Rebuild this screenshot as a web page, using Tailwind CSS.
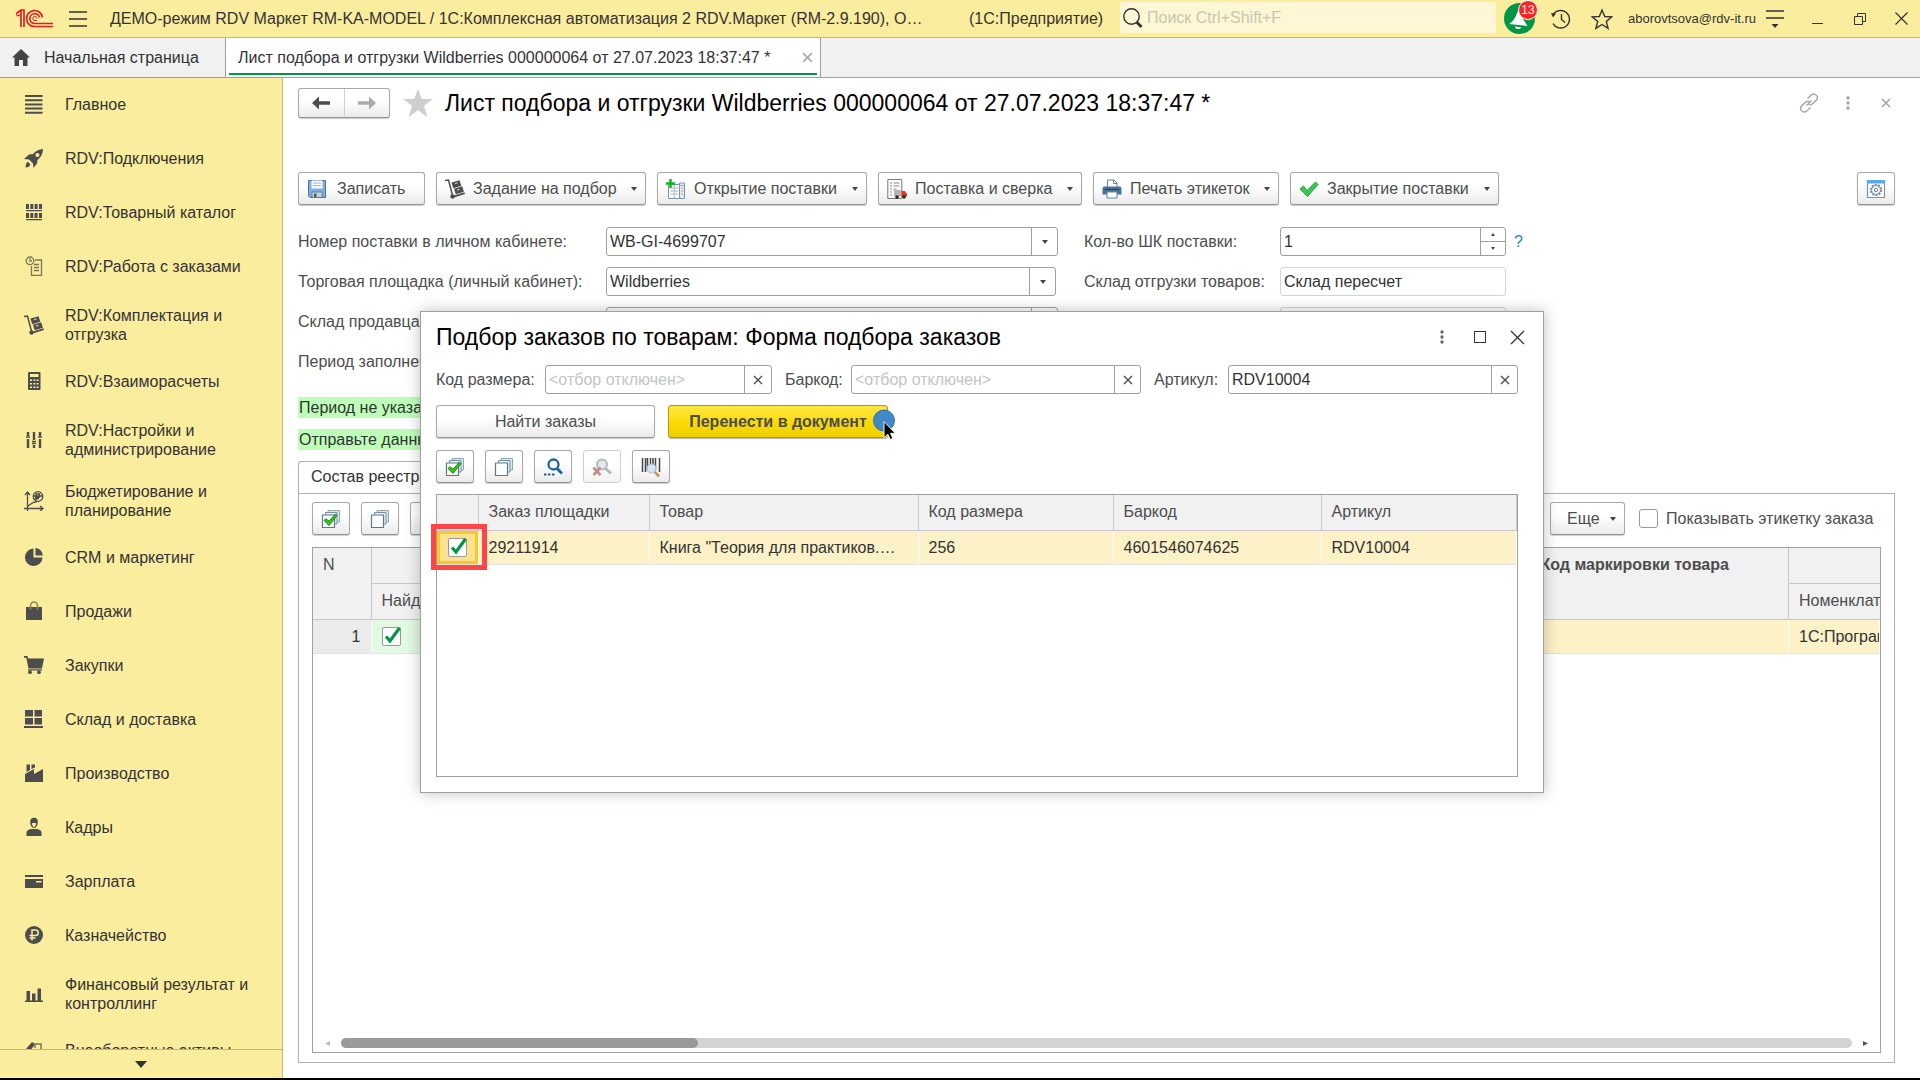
<!DOCTYPE html>
<html lang="ru">
<head>
<meta charset="utf-8">
<title>Лист подбора и отгрузки Wildberries</title>
<script src="https://cdn.jsdelivr.net/npm/@tailwindcss/browser@4"></script>
</head>
<body class="relative flex h-screen flex-col overflow-hidden border-b-2 border-black bg-white font-['Liberation_Sans',Arial,sans-serif] text-base leading-[19px] text-[#4d4d4d]">

<svg class="hidden" aria-hidden="true">
  <symbol id="i-caret" viewBox="0 0 6 4"><path d="M0 0h6L3 4z" fill="#444"/></symbol>
  <symbol id="i-x" viewBox="0 0 10 10"><path d="M1 1l8 8M9 1L1 9" stroke="currentColor" stroke-width="1.4"/></symbol>
  <symbol id="i-dots" viewBox="0 0 4 16"><circle cx="2" cy="2.3" r="1.9" fill="currentColor"/><circle cx="2" cy="8" r="1.9" fill="currentColor"/><circle cx="2" cy="13.7" r="1.9" fill="currentColor"/></symbol>
  <symbol id="i-check" viewBox="0 0 19 19"><path d="M4 9.5l4 4.5L17.5 1" fill="none" stroke="#009646" stroke-width="3.2"/></symbol>
  <symbol id="i-stack" viewBox="0 0 20 20">
    <path d="M7 1.5h11.500v11.500H7z" fill="#dce6ec" stroke="#8fa6b5"/><path d="M4.500 3.500h11.500v11.500H4.500z" fill="#e6eef3" stroke="#7790a1"/><path d="M1.500 6h12v12.500h-12z" fill="#fff" stroke="#5c7a8e" stroke-width="1.200"/>
  </symbol>
  <symbol id="i-stackcheck" viewBox="0 0 20 20">
    <path d="M7 1.500h11.500v11.500H7z" fill="#dce6ec" stroke="#8fa6b5"/><path d="M4.500 3.500h11.500v11.500H4.500z" fill="#e6eef3" stroke="#7790a1"/><path d="M1.500 6h12v12.500h-12z" fill="#fff" stroke="#5c7a8e" stroke-width="1.200"/>
    <path d="M3 11.500l2-1.800 3 2.500L14.500 5l1.500 1.500-8 10z" fill="#35c80c" stroke="#0f7d0a" stroke-width=".9"/>
  </symbol>
  <symbol id="i-truck" viewBox="0 0 20 20">
    <path d="M0 1.500l3.500-.5L8 18" fill="none" stroke="#4d4d4d" stroke-width="1.500"/>
    <circle cx="7.500" cy="17.500" r="2.200" fill="#4d4d4d"/><path d="M9 16.500l10.500-3.300.5 1.800-11 3.500z" fill="#4d4d4d"/>
    <path d="M6.500 3.500l8-2.300 1.800 5.500-8 2.500z" fill="#4d4d4d"/><path d="M9 9.700l8.200-2.500 1.700 5.500-8.200 2.600z" fill="#4d4d4d"/>
    <path d="M10 4.500l2.500-.7M12 11l2.500-.7" stroke="#d8d0a0" stroke-width="1.200"/>
  </symbol>
</svg>

<!-- Title bar -->
<header class="flex h-[38px] shrink-0 items-center border-b border-[#c6ba6c] bg-[#fbed9e] text-[#333]">
  <svg class="ml-4 h-[19px] w-[37px] shrink-0" viewBox="0 0 37 19" fill="none" stroke="#dd1f26" stroke-width="1.700"><path d="M0 5l4-3.500h1V18M8 18V1H4.500M.5 6.500H4"/><path d="M26.500 8.500a8 8 0 1 0-7.500 9h18M23.500 8.500a4.900 4.900 0 1 0-4.500 6h18"/><path d="M20.800 9.500a2 2 0 1 0-1.800 2h2" stroke-width="1"/></svg>
  <button class="ml-4 shrink-0" aria-label="Меню"><svg class="h-[18px] w-[18px]" viewBox="0 0 18 18" stroke="#333" stroke-width="1.500"><path d="M0 2h18M0 9h18M0 16h18"/></svg></button>
  <div class="ml-[23px] w-[836px] shrink whitespace-nowrap">ДЕМО-режим RDV Маркет RM-KA-MODEL / 1С:Комплексная автоматизация 2 RDV.Маркет (RM-2.9.190), О…</div>
  <div class="ml-[23px] w-[138px] shrink-0">(1С:Предприятие)</div>
  <label class="mt-[2px] ml-[13px] flex h-[31px] min-w-0 flex-1 items-center gap-1 self-start rounded-[3px] bg-[#fef7d5] pl-[3px]">
    <svg class="h-5 w-5 shrink-0" viewBox="0 0 20 20" fill="none" stroke="#333"><circle cx="8.500" cy="8.500" r="7.700" stroke-width="1.400"/><path d="M13.500 14l5 5" stroke-width="2.800"/></svg>
    <input type="search" placeholder="Поиск Ctrl+Shift+F" aria-label="Поиск" class="min-w-0 flex-1 bg-transparent leading-[19px] placeholder-[#c9c5b0] outline-none">
  </label>
  <button class="relative ml-2 h-[31px] w-[31px] shrink-0 rounded-full bg-[#009646]" aria-label="Уведомления">
    <svg class="h-[31px] w-[31px]" viewBox="0 0 31 31"><path d="M14 8L23.500 23 5 21c4-2 6-6 9-13z" fill="#fff"/><path d="M10.500 23.500c1 3 5.500 3.500 7 .8z" fill="#fff"/></svg>
    <span class="absolute -top-[3px] -right-[3px] flex h-5 w-5 items-center justify-center rounded-full border border-white bg-[#fb2323] text-[12px] text-white">13</span>
  </button>
  <button class="ml-4 shrink-0" aria-label="История"><svg class="h-5 w-5" viewBox="0 0 20 20" fill="none" stroke="#333" stroke-width="1.400"><path d="M2 6a8.800 8.800 0 1 1 0 8.500"/><path d="M10.500 5v5.500l3.500 3"/><path d="M0 4l5 .500-3 4z" fill="#333" stroke="none"/></svg></button>
  <button class="ml-5 shrink-0" aria-label="Избранное"><svg class="h-[22px] w-[22px]" viewBox="0 0 22 22" fill="none" stroke="#333" stroke-width="1.400"><path d="M11 2l2.700 6.500 7 .4-5.400 4.500 1.800 7L11 16.500 4.900 20.400l1.800-7L1.300 8.900l7-.4z"/></svg></button>
  <div class="ml-[15px] w-[122px] shrink-0 text-[13px] whitespace-nowrap">aborovtsova@rdv-it.ru</div>
  <button class="ml-4 shrink-0" aria-label="Сервис"><svg class="h-5 w-[18px]" viewBox="0 0 18 20" stroke="#333" stroke-width="1.500"><path d="M0 2h18M0 9h18"/><path d="M5.500 15h7L9 19z" fill="#333" stroke="none"/></svg></button>
  <button class="ml-7 shrink-0" aria-label="Свернуть"><svg class="h-3 w-3" viewBox="0 0 12 12" stroke="#333"><path d="M0 10.500h11"/></svg></button>
  <button class="ml-[30px] shrink-0" aria-label="Восстановить"><svg class="h-3 w-3" viewBox="0 0 12 12" fill="none" stroke="#333"><path d="M.5 3.500h8v8h-8zM3.500 3.500v-3h8v8h-3"/></svg></button>
  <button class="mr-3 ml-[29px] shrink-0" aria-label="Закрыть"><svg class="h-[13px] w-[13px]" viewBox="0 0 13 13" stroke="#333" stroke-width="1.200"><path d="M.5.5l12 12M12.500.5l-12 12"/></svg></button>
</header>

<!-- Open pages -->
<nav class="flex h-10 shrink-0 border-b border-[#a0a0a0] bg-[#f1f1f1] text-[#333]">
  <a href="#" class="flex w-[226px] items-center gap-3.5 border-r border-[#a0a0a0] pl-3">
    <svg class="h-[17px] w-[18px]" viewBox="0 0 18 17"><path d="M9 0l9 8.500h-2.500V17H11v-6H7v6H2.500V8.500H0z" fill="#444"/></svg>Начальная страница</a>
  <div class="flex w-[595px] flex-col border-r border-[#a0a0a0] bg-white px-[3px] pb-[2px]">
    <div class="flex flex-1 items-center justify-between border-b-2 border-[#009646] pt-[3px] pr-1 pl-[9px]">
      <a href="#" class="whitespace-nowrap">Лист подбора и отгрузки Wildberries 000000064 от 27.07.2023 18:37:47 *</a>
      <button class="text-[#a8a8a8]" aria-label="Закрыть вкладку"><svg class="h-[11px] w-[11px]"><use href="#i-x"/></svg></button>
    </div>
  </div>
</nav>

<div class="flex min-h-0 flex-1">
  <!-- Sections -->
  <aside class="flex w-[283px] shrink-0 flex-col border-r border-[#c6ba6c] bg-[#fbed9e] text-[#333]">
    <ul class="min-h-0 flex-1 overflow-hidden">
      <li><a href="#" class="flex h-[54px] items-center gap-[21px] pb-0.5 pl-6"><svg class="h-5 w-5 shrink-0" viewBox="0 0 20 20" stroke="#4d4d4d" stroke-width="2"><path d="M1 2h17.500M1 6.200h17.500M1 10.400h17.500M1 14.600h17.500M1 18.800h17.500"/></svg>Главное</a></li>
      <li><a href="#" class="flex h-[54px] items-center gap-[21px] pb-0.5 pl-6"><svg class="h-5 w-5 shrink-0" viewBox="0 0 20 20" fill="#4d4d4d"><path fill-rule="evenodd" d="M19 1c-4 .3-7.500 2-10 5L5 6.500 0 11l5 .5 4 4 .5 4.500 3.500-4.500.5-3.500c4-3 5.300-7 5.500-11zM13.500 5a2 2 0 1 1-.1 4.100A2 2 0 0 1 13.500 5z"/><path d="M3.500 13.500l3 3-2 2.500-3 .5L2 16z"/></svg>RDV:Подключения</a></li>
      <li><a href="#" class="flex h-[54px] items-center gap-[21px] pb-0.5 pl-6"><svg class="h-5 w-5 shrink-0" viewBox="0 0 20 20" fill="#4d4d4d"><path d="M2 2h3v5H2zM6.300 2h3v5h-3zM10.600 2h3v5h-3zM15 2h3v5h-3zM2 11h3v5H2zM6.300 11h3v5h-3zM10.600 11h3v5h-3zM15 11h3v5h-3zM2 8h16v1.200H2zM2 17h16v1.300H2z"/></svg>RDV:Товарный каталог</a></li>
      <li><a href="#" class="flex h-[54px] items-center gap-[21px] pb-0.5 pl-6"><svg class="h-5 w-5 shrink-0" viewBox="0 0 20 20" fill="none" stroke="#7c7656" stroke-width="1.300"><circle cx="6" cy="4.800" r="3.800"/><path d="M6 2.500v2.500h2M11 4h6.500v15.300h-10V10M10 8.500h5M10 11.500h5M10 14.500h5"/></svg>RDV:Работа с заказами</a></li>
      <li><a href="#" class="flex h-[61px] items-center gap-[21px] pl-6"><svg class="h-5 w-5 shrink-0"><use href="#i-truck"/></svg><span>RDV:Комплектация и<br>отгрузка</span></a></li>
      <li><a href="#" class="flex h-[54px] items-center gap-[21px] pb-0.5 pl-6"><svg class="h-5 w-5 shrink-0" viewBox="0 0 20 20"><rect x="4" y="1" width="12.500" height="18" rx="1" fill="#4d4d4d"/><path d="M6 3h8.500v3H6zM6 8.500h2v1.500H6zM9.300 8.500h2v1.500h-2zM12.500 8.500h2v1.500h-2zM6 12h2v1.500H6zM9.300 12h2v1.500h-2zM12.500 12h2v1.500h-2zM6 15.500h2V17H6zM9.300 15.500h2V17h-2zM12.500 15.500h2V17h-2z" fill="#fbed9e"/></svg>RDV:Взаиморасчеты</a></li>
      <li><a href="#" class="flex h-[61px] items-center gap-[21px] pl-6"><svg class="h-5 w-5 shrink-0" viewBox="0 0 20 20" stroke="#4d4d4d"><path d="M4 2v4M4 9v9M10 2v8M10 15v3M16 2v4M16 9v9" stroke-width="2.400"/><path d="M2 7h4M8 11.500h4M8 13.500h4M14 7h4" stroke-width="1.300"/></svg><span>RDV:Настройки и<br>администрирование</span></a></li>
      <li><a href="#" class="flex h-[61px] items-center gap-[21px] pl-6"><svg class="h-5 w-5 shrink-0" viewBox="0 0 20 20" fill="none" stroke="#4d4d4d" stroke-width="1.300"><path d="M3.500 20V1M1 4l2.500-3L6 4M0 17.500h19M16 15l3 2.500-3 2.500M4 15l5-3.500 4-1"/><circle cx="14" cy="5.500" r="4.800"/><path d="M12 9V3h3.500v3H11M11 7.500h4M10 5h9"/></svg><span>Бюджетирование и<br>планирование</span></a></li>
      <li><a href="#" class="flex h-[54px] items-center gap-[21px] pb-0.5 pl-6"><svg class="h-5 w-5 shrink-0" viewBox="0 0 20 20" fill="#4d4d4d"><path d="M9.500 1.500v9h9a8.800 8.800 0 1 1-9-9z"/><path d="M11.500 1c4 .3 7 3.500 7.300 7.500h-7.300z"/></svg>CRM и маркетинг</a></li>
      <li><a href="#" class="flex h-[54px] items-center gap-[21px] pb-0.5 pl-6"><svg class="h-5 w-5 shrink-0" viewBox="0 0 20 20"><path d="M2 6h16v13H2z" fill="#4d4d4d"/><path d="M6.500 9V4.500a3.500 3.500 0 0 1 7 0V9" fill="none" stroke="#8c845c" stroke-width="1.600"/></svg>Продажи</a></li>
      <li><a href="#" class="flex h-[54px] items-center gap-[21px] pb-0.5 pl-6"><svg class="h-5 w-5 shrink-0" viewBox="0 0 20 20" fill="#4d4d4d"><path d="M0 1h3.500l.8 2.500H20l-2 10H4.500L2.300 2.800H0zM4 14.300h14v1.200H4z"/><circle cx="6" cy="17.200" r="1.900"/><circle cx="15" cy="17.200" r="1.900"/></svg>Закупки</a></li>
      <li><a href="#" class="flex h-[54px] items-center gap-[21px] pb-0.5 pl-6"><svg class="h-5 w-5 shrink-0" viewBox="0 0 20 20" fill="#4d4d4d"><path d="M1 1h8v6.500H1zM10.500 1h7.500v6.500h-7.500zM1 9h8v6.500H1zM10.500 9h7.500v6.500h-7.500zM0 17h19v2H0z"/></svg>Склад и доставка</a></li>
      <li><a href="#" class="flex h-[54px] items-center gap-[21px] pb-0.5 pl-6"><svg class="h-5 w-5 shrink-0" viewBox="0 0 20 20" fill="#4d4d4d"><path d="M1 19V11l9-5v5l9-5v13zM2.500 1.500h3.500v5.500l-3.500 2zM7.500 1.500H11v3L7.500 6z"/></svg>Производство</a></li>
      <li><a href="#" class="flex h-[54px] items-center gap-[21px] pb-0.5 pl-6"><svg class="h-5 w-5 shrink-0" viewBox="0 0 20 20"><path d="M2.500 19v-3.500c0-2 2-3 4.500-3.500h6c2.500.5 4.500 1.500 4.500 3.500V19z" fill="#4d4d4d"/><path d="M6.200 5a3.800 4.200 0 0 1 7.600 0c0 3-1.700 6-3.800 6s-3.800-3-3.800-6z" fill="#4d4d4d"/><path d="M8 6h4c0 2-.8 4-2 4s-2-2-2-4z" fill="#fbed9e"/></svg>Кадры</a></li>
      <li><a href="#" class="flex h-[54px] items-center gap-[21px] pb-0.5 pl-6"><svg class="h-5 w-5 shrink-0" viewBox="0 0 20 20"><path d="M1 4h18v2H1z" fill="#4d4d4d"/><path d="M1 8h18v9H1z" fill="#4d4d4d"/><path d="M12 10h5.500v1.500H12z" fill="#fbed9e"/></svg>Зарплата</a></li>
      <li><a href="#" class="flex h-[54px] items-center gap-[21px] pb-0.5 pl-6"><svg class="h-5 w-5 shrink-0" viewBox="0 0 20 20"><circle cx="10" cy="10" r="9" fill="#4d4d4d"/><path d="M8 15.500V5h3.500a2.800 2.800 0 0 1 0 5.600H5.500M5.500 13h6" fill="none" stroke="#fbed9e" stroke-width="1.500"/></svg>Казначейство</a></li>
      <li><a href="#" class="flex h-[61px] items-center gap-[21px] pl-6"><svg class="h-5 w-5 shrink-0" viewBox="0 0 20 20" fill="#4d4d4d"><path d="M1 16.500h18V18H1zM2.500 7H6v9.500H2.500zM8 9.500h3.500v7H8zM13.500 4.500H17v12h-3.500z"/></svg><span>Финансовый результат и<br>контроллинг</span></a></li>
      <li><a href="#" class="flex h-[54px] items-center gap-[21px] pb-0.5 pl-6"><svg class="h-5 w-5 shrink-0" viewBox="0 0 20 20"><path d="M2 9l6-7 3 2-4 6z" fill="#4d4d4d"/><path d="M11 8V4h6v6h-6" fill="none" stroke="#7c7656" stroke-width="1.500"/></svg>Внеоборотные активы</a></li>
    </ul>
    <button class="flex h-[29px] shrink-0 items-center justify-center border-t border-[#c6ba6c]" aria-label="Ещё разделы"><svg class="h-[7px] w-3" viewBox="0 0 12 7"><path d="M0 0h12L6 7z" fill="#333"/></svg></button>
  </aside>

  <!-- Document form -->
  <main class="flex min-w-0 flex-1 flex-col pt-[10px] pr-[25px] pb-[15px] pl-[15px]">
    <div class="flex items-center">
      <div class="flex h-[30px] w-[92px] rounded-[3px] border border-[#a8a8a8] border-b-[#949494] bg-linear-to-b from-white from-40% to-[#ebebeb] shadow-[0_1px_1px_rgba(0,0,0,0.2)]">
        <button class="flex flex-1 items-center justify-center border-r border-[#d0d0d0]" aria-label="Назад"><svg class="h-3.5 w-[18px]" viewBox="0 0 18 14" fill="#4d4d4d"><path d="M0 7l7-6.500v4.800h11v3.400H7v4.800z"/></svg></button>
        <button class="flex flex-1 items-center justify-center" aria-label="Вперёд"><svg class="h-3.5 w-[18px]" viewBox="0 0 18 14" fill="#aaa"><path d="M18 7l-7-6.500v4.800H0v3.400h11v4.800z"/></svg></button>
      </div>
      <button class="ml-[13px]" aria-label="В избранное"><svg class="h-[30px] w-[30px]" viewBox="0 0 30 30"><path d="M15 1l3.800 10H30l-9 6.800L24.300 29 15 22.200 5.700 29 9 17.800 0 11h11.200z" fill="#cfcfcf"/></svg></button>
      <h1 class="ml-3 flex-1 text-[23px] leading-[28px] whitespace-nowrap text-black">Лист подбора и отгрузки Wildberries 000000064 от 27.07.2023 18:37:47 *</h1>
      <div class="flex items-center gap-[27px] pr-1 text-[#a0a0a0]">
        <button aria-label="Ссылка"><svg class="h-5 w-5" viewBox="0 0 20 20" fill="none" stroke="#a8a8a8" stroke-width="1.500"><path d="M8.500 5.500l4-3.700c2-1.500 4.200-.5 5.200.8 1 1.500.8 3.300-.4 4.500l-3.800 3.700c-1 1-2.800 1-4 .2M11.500 14.500l-4 3.700c-2 1.500-4.200.5-5.200-.8-1-1.500-.8-3.300.4-4.500l3.800-3.700c1-1 2.800-1 4-.2M7.500 12.500l5-5"/></svg></button>
        <button aria-label="Ещё"><svg class="h-[14px] w-1"><use href="#i-dots"/></svg></button>
        <button class="pl-1" aria-label="Закрыть"><svg class="h-[10px] w-[10px]"><use href="#i-x"/></svg></button>
      </div>
    </div>

    <!-- Commands -->
    <div class="mt-[54px] flex gap-[11px] whitespace-nowrap">
      <button class="flex h-[33px] w-[127px] items-center gap-2.5 rounded-[3px] border border-[#a8a8a8] border-b-[#949494] bg-linear-to-b from-white from-40% to-[#ebebeb] pl-2 shadow-[0_1px_1px_rgba(0,0,0,0.2)]">
        <svg class="h-5 w-5" viewBox="0 0 20 20"><path d="M1.500 1.500h17v17H3l-1.500-1.500z" fill="#7db0e0" stroke="#4c7196"/><path d="M4.500 1.500h11v8h-11z" fill="#fff"/><path d="M6 4h8M6 6.500h8" stroke="#9db4c6"/><path d="M5 13h10v5.500H5z" fill="#c9d2d8" stroke="#4c7196" stroke-width=".8"/><path d="M7 14.500h2.500V18H7z" fill="#4d5a66"/></svg>Записать</button>
      <button class="flex h-[33px] w-[210px] items-center gap-2 rounded-[3px] border border-[#a8a8a8] border-b-[#949494] bg-linear-to-b from-white from-40% to-[#ebebeb] pr-2 pl-2 shadow-[0_1px_1px_rgba(0,0,0,0.2)]">
        <svg class="h-5 w-5"><use href="#i-truck"/></svg><span class="flex-1 text-left">Задание на подбор</span><svg class="h-1 w-1.5"><use href="#i-caret"/></svg></button>
      <button class="flex h-[33px] w-[210px] items-center gap-2 rounded-[3px] border border-[#a8a8a8] border-b-[#949494] bg-linear-to-b from-white from-40% to-[#ebebeb] pr-2 pl-2 shadow-[0_1px_1px_rgba(0,0,0,0.2)]">
        <svg class="h-5 w-5" viewBox="0 0 20 20"><path d="M2.500 5.500h11v14h-11z" fill="#fff" stroke="#7a94a6"/><path d="M13.500 4h5v15.500h-5z" fill="#e4ecf1" stroke="#7a94a6"/><path d="M4.500 9h3M4.500 12h3M4.500 15h3M9 9h3M9 12h3M9 15h3M15 9h2.500M15 12h2.500M15 15h2.500M13.500 6.500h5M8.200 6v13" stroke="#9aafbd"/><path d="M4.500 0v9M0 4.500h9" stroke="#0fb51c" stroke-width="2.400"/></svg><span class="flex-1 text-left">Открытие поставки</span><svg class="h-1 w-1.5"><use href="#i-caret"/></svg></button>
      <button class="flex h-[33px] w-[204px] items-center gap-2 rounded-[3px] border border-[#a8a8a8] border-b-[#949494] bg-linear-to-b from-white from-40% to-[#ebebeb] pr-2 pl-2 shadow-[0_1px_1px_rgba(0,0,0,0.2)]">
        <svg class="h-5 w-5" viewBox="0 0 20 20"><path d="M.8.500h14v19H.8z" fill="#fff" stroke="#777"/><path d="M3 4h2M6.500 4h6M3 7h2M6.500 7h6M3 10h2M6.500 10h3M3 13h2M3 16h2" stroke="#888" stroke-width="1.200"/><path d="M7 11h7.500v6.500H7z" fill="#b5b5b5"/><path d="M14.500 12h3.300l2.200 3v2.500h-5.500z" fill="#e2341d"/><circle cx="10" cy="18" r="1.800" fill="#222"/><circle cx="17" cy="18" r="1.800" fill="#222"/></svg><span class="flex-1 text-left">Поставка и сверка</span><svg class="h-1 w-1.5"><use href="#i-caret"/></svg></button>
      <button class="flex h-[33px] w-[186px] items-center gap-2 rounded-[3px] border border-[#a8a8a8] border-b-[#949494] bg-linear-to-b from-white from-40% to-[#ebebeb] pr-2 pl-2 shadow-[0_1px_1px_rgba(0,0,0,0.2)]">
        <svg class="h-5 w-5" viewBox="0 0 20 20"><path d="M5.500 8V1h6.500l3 3v4" fill="#fff" stroke="#6a8299"/><path d="M11.500 1v3.500H15" fill="none" stroke="#6a8299"/><path d="M1.500 7.500h17l1 2v6h-19v-6z" fill="#4a7199"/><path d="M3 10.500h14" stroke="#27415c"/><path d="M5 13h10v6H5z" fill="#fff" stroke="#6a8299"/></svg><span class="flex-1 text-left">Печать этикеток</span><svg class="h-1 w-1.5"><use href="#i-caret"/></svg></button>
      <button class="flex h-[33px] w-[209px] items-center gap-2 rounded-[3px] border border-[#a8a8a8] border-b-[#949494] bg-linear-to-b from-white from-40% to-[#ebebeb] pr-2 pl-2 shadow-[0_1px_1px_rgba(0,0,0,0.2)]">
        <svg class="h-5 w-5" viewBox="0 0 20 20"><path d="M1 10l3.500-3 3.500 4.500L16.500 3 19 5.500 8.500 17.500z" fill="#3cc552" stroke="#2aa83f"/></svg><span class="flex-1 text-left">Закрытие поставки</span><svg class="h-1 w-1.5"><use href="#i-caret"/></svg></button>
      <button class="ml-auto flex h-[33px] w-[38px] items-center justify-center rounded-[3px] border border-[#a8a8a8] border-b-[#949494] bg-linear-to-b from-white from-40% to-[#ebebeb] shadow-[0_1px_1px_rgba(0,0,0,0.2)]" aria-label="Настройка">
        <svg class="h-5 w-5" viewBox="0 0 20 20"><path d="M1.500 1.500h17v17h-17z" fill="#fff" stroke="#7f93a3" stroke-width="1.200"/><path d="M1 1h18v3.500H1z" fill="#58a7e6"/><circle cx="10" cy="11" r="5.300" fill="#eef3f6" stroke="#6c8190" stroke-width="1.600" stroke-dasharray="2 1.300"/><circle cx="10" cy="11" r="4.300" fill="#fff" stroke="#6c8190" stroke-width=".8"/><circle cx="10" cy="11" r="1.700" fill="none" stroke="#6c8190"/></svg></button>
    </div>

    <!-- Fields -->
    <div class="mt-[22px] grid w-full grid-cols-[308px_452px_26px_196px_226px_1fr] gap-y-[11px] *:h-[29px]">
      <label for="f1" class="flex items-center">Номер поставки в личном кабинете:</label>
      <div class="flex rounded-[3px] border border-[#a0a0a0]"><input id="f1" value="WB-GI-4699707" class="min-w-0 flex-1 pl-[3px] text-[#333] outline-none"><button class="flex w-[26px] items-center justify-center border-l border-[#a0a0a0]" aria-label="Выбрать"><svg class="h-1 w-1.5"><use href="#i-caret"/></svg></button></div>
      <i></i>
      <label for="f2" class="flex items-center">Кол-во ШК поставки:</label>
      <div class="flex rounded-[3px] border border-[#a0a0a0]"><input id="f2" value="1" class="min-w-0 flex-1 pl-[3px] text-[#333] outline-none">
        <div class="flex w-[25px] flex-col border-l border-[#a0a0a0]"><button class="flex flex-1 items-center justify-center border-b border-[#a0a0a0]" aria-label="Больше"><svg class="h-[3px] w-1" viewBox="0 0 4 3"><path d="M0 3h4L2 0z" fill="#444"/></svg></button><button class="flex flex-1 items-center justify-center" aria-label="Меньше"><svg class="h-[3px] w-1" viewBox="0 0 4 3"><path d="M0 0h4L2 3z" fill="#444"/></svg></button></div></div>
      <div class="flex items-center pl-2"><a href="#" class="text-[#1e7fc8]">?</a></div>

      <label for="f3" class="flex items-center">Торговая площадка (личный кабинет):</label>
      <div class="mr-[2px] flex rounded-[3px] border border-[#a0a0a0]"><select id="f3" class="min-w-0 flex-1 appearance-none pl-[3px] text-[#333] outline-none"><option>Wildberries</option></select><span class="flex w-[26px] items-center justify-center border-l border-[#a0a0a0]"><svg class="h-1 w-1.5"><use href="#i-caret"/></svg></span></div>
      <i></i>
      <label for="f4" class="flex items-center whitespace-nowrap">Склад отгрузки товаров:</label>
      <input id="f4" readonly value="Склад пересчет" class="min-w-0 rounded-[3px] border border-[#d4d4d4] pl-[3px] text-[#333] outline-none">
      <i></i>

      <label for="f5" class="flex items-center">Склад продавца:</label>
      <div class="flex rounded-[3px] border border-[#a0a0a0]"><select id="f5" class="min-w-0 flex-1 appearance-none pl-[3px] outline-none"></select><span class="w-[26px] border-l border-[#a0a0a0]"></span></div>
      <i></i><i></i>
      <input readonly aria-label="Дополнительно" class="min-w-0 rounded-[3px] border border-[#d4d4d4]">
      <i></i>
      <div class="flex items-center">Период заполнения:</div>
    </div>
    <div class="mt-[21px] flex w-[400px] flex-col gap-[11px] text-[#333] *:h-[21px] *:bg-[#bdffb9] *:pt-px *:pl-px">
      <p>Период не указан</p>
      <p>Отправьте данные</p>
    </div>

    <!-- Register tab -->
    <div class="mt-[11px] h-8 w-[140px] rounded-tl-[3px] border-t border-l border-[#b0b0b0] pt-[5px] pl-3 text-[#333]">Состав реестра</div>
    <section class="flex min-h-0 flex-1 flex-col border border-[#b0b0b0] px-[13px] pt-2 pb-[9px]">
      <div class="flex shrink-0 items-center gap-[11px]">
        <button class="flex h-[33px] w-[38px] items-center justify-center rounded-[3px] border border-[#a8a8a8] border-b-[#949494] bg-linear-to-b from-white from-40% to-[#ebebeb] shadow-[0_1px_1px_rgba(0,0,0,0.2)]" aria-label="Отметить все"><svg class="h-5 w-5"><use href="#i-stackcheck"/></svg></button>
        <button class="flex h-[33px] w-[38px] items-center justify-center rounded-[3px] border border-[#a8a8a8] border-b-[#949494] bg-linear-to-b from-white from-40% to-[#ebebeb] shadow-[0_1px_1px_rgba(0,0,0,0.2)]" aria-label="Снять отметки"><svg class="h-5 w-5"><use href="#i-stack"/></svg></button>
        <button class="h-[33px] w-[38px] rounded-[3px] border border-[#a8a8a8] border-b-[#949494] bg-linear-to-b from-white from-40% to-[#ebebeb] shadow-[0_1px_1px_rgba(0,0,0,0.2)]" aria-label="Заполнить"></button>
        <button class="ml-auto flex h-[33px] w-[75px] items-center gap-2.5 rounded-[3px] border border-[#a8a8a8] border-b-[#949494] bg-linear-to-b from-white from-40% to-[#ebebeb] pl-4 shadow-[0_1px_1px_rgba(0,0,0,0.2)]">Еще<svg class="h-1 w-1.5"><use href="#i-caret"/></svg></button>
        <label class="ml-[3px] flex w-[242px] items-center gap-2 whitespace-nowrap"><input type="checkbox" class="h-[19px] w-[19px] appearance-none rounded-[3px] border border-[#999] bg-white">Показывать этикетку заказа</label>
      </div>

      <div class="mt-3 flex min-h-0 flex-1 flex-col border border-[#a0a0a0]">
        <table class="w-full table-fixed border-collapse text-left whitespace-nowrap">
          <colgroup><col class="w-[58px]"><col><col class="w-[258px]"><col class="w-[91px]"></colgroup>
          <thead class="bg-[#f1f1f1] *:*:overflow-hidden">
            <tr class="h-[35px] *:border-b *:border-[#c8c8c8]"><th rowspan="2" class="border-r pt-[7px] pl-2.5 align-top font-normal">N</th><th></th><th rowspan="2" class="border-r pt-[7px] pl-2.5 align-top">Код маркировки товара</th><th></th></tr>
            <tr class="h-9 *:border-b *:border-[#c8c8c8]"><th class="pb-0.5 pl-2.5 font-normal">Найден</th><th class="pb-0.5 pl-2.5 font-normal">Номенклатура</th></tr>
          </thead>
          <tbody>
            <tr class="h-[34px] border-b border-[#e2e2e2] bg-[#fdf1c7] text-[#333] *:overflow-hidden *:border-r *:border-white"><td class="bg-[#ebebeb] pr-2.5 text-right">1</td><td class="bg-linear-to-r from-[#e2f9e2] from-50% to-[#fdf1c7] to-50% pl-2.5"><label class="grid w-[19px]"><input type="checkbox" checked aria-label="Найден" class="col-start-1 row-start-1 h-[19px] w-[19px] appearance-none rounded-[2px] border border-[#999] bg-white"><svg class="col-start-1 row-start-1 h-[19px] w-[19px]"><use href="#i-check"/></svg></label></td><td></td><td class="pl-2.5">1С:Программа</td></tr>
          </tbody>
        </table>
        <div class="mt-auto mb-1 flex h-[10px] items-center gap-[11px] px-3">
          <svg class="h-[5px] w-[5px] shrink-0" viewBox="0 0 5 5"><path d="M5 0v5L0 2.500z" fill="#bbb"/></svg>
          <div class="h-[10px] flex-1 rounded-full bg-[#d3d3d3]"><div class="h-[10px] w-[357px] rounded-full bg-[#999]"></div></div>
          <svg class="h-[5px] w-[5px] shrink-0" viewBox="0 0 5 5"><path d="M0 0v5l5-2.500z" fill="#555"/></svg>
        </div>
      </div>
    </section>
  </main>
</div>

<!-- Order picking window -->
<div role="dialog" aria-labelledby="dlg" class="absolute top-[311px] left-[420px] flex h-[482px] w-[1124px] flex-col border border-[#a0a0a0] bg-white pt-[11px] pr-[25px] pb-[15px] pl-[15px] shadow-[0_0_14px_rgba(0,0,0,0.25)]">
  <div class="flex h-7 items-center">
    <h2 id="dlg" class="flex-1 text-[23px] leading-[28px] text-black">Подбор заказов по товарам: Форма подбора заказов</h2>
    <button class="mr-[30px] text-[#666]" aria-label="Ещё"><svg class="h-[14px] w-1"><use href="#i-dots"/></svg></button>
    <button class="mr-6" aria-label="Развернуть"><span class="block h-3 w-3 border border-[#333]"></span></button>
    <button class="-mr-[7px] text-[#333]" aria-label="Закрыть"><svg class="h-[15px] w-[15px]" viewBox="0 0 15 15"><path d="M1 1l13 13M14 1L1 14" stroke="#333" stroke-width="1.300"/></svg></button>
  </div>

  <div class="mt-[14px] grid shrink-0 grid-cols-[109px_227px_13px_66px_290px_13px_74px_290px] *:h-[29px]">
    <label for="g1" class="flex items-center whitespace-nowrap">Код размера:</label>
    <div class="flex rounded-[3px] border border-[#a0a0a0]"><input id="g1" placeholder="&lt;отбор отключен&gt;" class="min-w-0 flex-1 pl-[3px] placeholder-[#c4c4c4] outline-none"><button class="flex w-[27px] items-center justify-center border-l border-[#a0a0a0]" aria-label="Очистить"><svg class="h-[10px] w-[10px]"><use href="#i-x"/></svg></button></div>
    <i></i>
    <label for="g2" class="flex items-center">Баркод:</label>
    <div class="flex rounded-[3px] border border-[#a0a0a0]"><input id="g2" placeholder="&lt;отбор отключен&gt;" class="min-w-0 flex-1 pl-[3px] placeholder-[#c4c4c4] outline-none"><button class="flex w-[26px] items-center justify-center border-l border-[#a0a0a0]" aria-label="Очистить"><svg class="h-[10px] w-[10px]"><use href="#i-x"/></svg></button></div>
    <i></i>
    <label for="g3" class="flex items-center">Артикул:</label>
    <div class="flex rounded-[3px] border border-[#a0a0a0]"><input id="g3" value="RDV10004" class="min-w-0 flex-1 pl-[3px] text-[#333] outline-none"><button class="flex w-[26px] items-center justify-center border-l border-[#a0a0a0]" aria-label="Очистить"><svg class="h-[10px] w-[10px]"><use href="#i-x"/></svg></button></div>
  </div>

  <div class="mt-[11px] flex shrink-0 gap-[13px]">
    <button class="h-[33px] w-[219px] rounded-[3px] border border-[#a8a8a8] border-b-[#949494] bg-linear-to-b from-white from-40% to-[#ebebeb] shadow-[0_1px_1px_rgba(0,0,0,0.2)]">Найти заказы</button>
    <button class="relative h-[33px] w-[220px] rounded-[3px] border border-[#b59b00] bg-linear-to-b from-[#ffe83c] via-[#fbdc00] to-[#efcf00] font-bold shadow-[0_1px_1px_rgba(0,0,0,0.3)]">Перенести в документ
      <svg class="absolute top-[3px] -right-[9px] h-[34px] w-[24px]" viewBox="0 0 24 34"><circle cx="12" cy="11.500" r="10.500" fill="#4189c7" stroke="#2f6fa8"/><path d="M12 12.500v16l3.800-3.300 2.400 5.300 2.600-1.200-2.300-5h4.700z" fill="#000" stroke="#fff" stroke-width=".9"/></svg>
    </button>
  </div>

  <div class="mt-3 flex shrink-0 gap-[11px]">
    <button class="flex h-[33px] w-[38px] items-center justify-center rounded-[3px] border border-[#a8a8a8] border-b-[#949494] bg-linear-to-b from-white from-40% to-[#ebebeb] shadow-[0_1px_1px_rgba(0,0,0,0.2)]" aria-label="Отметить все"><svg class="h-5 w-5"><use href="#i-stackcheck"/></svg></button>
    <button class="flex h-[33px] w-[38px] items-center justify-center rounded-[3px] border border-[#a8a8a8] border-b-[#949494] bg-linear-to-b from-white from-40% to-[#ebebeb] shadow-[0_1px_1px_rgba(0,0,0,0.2)]" aria-label="Снять отметки"><svg class="h-5 w-5"><use href="#i-stack"/></svg></button>
    <button class="flex h-[33px] w-[38px] items-center justify-center rounded-[3px] border border-[#a8a8a8] border-b-[#949494] bg-linear-to-b from-white from-40% to-[#ebebeb] shadow-[0_1px_1px_rgba(0,0,0,0.2)]" aria-label="Найти"><svg class="h-5 w-5" viewBox="0 0 20 20" fill="none" stroke="#1f6798"><circle cx="10.500" cy="7.500" r="5" stroke-width="2.300"/><path d="M14 11.500l5 5" stroke-width="3"/><path d="M1 17.500h2.500M5 17.500h2.500M9 17.500h2.500" stroke-width="2.200"/></svg></button>
    <button disabled class="flex h-[33px] w-[38px] items-center justify-center rounded-[3px] border border-[#cfcfcf] bg-linear-to-b from-white from-40% to-[#f3f3f3]" aria-label="Отменить поиск"><svg class="h-5 w-5" viewBox="0 0 20 20" fill="none" stroke="#b5b9bd"><circle cx="10" cy="7.500" r="5" fill="#e3e8ec" stroke-width="2"/><path d="M13.500 11.500l5.500 5" stroke-width="3"/><path d="M1.500 10.500l7 7.500M8.500 10.500l-7 7.500" stroke="#b98f8f" stroke-width="2.600"/></svg></button>
    <button class="flex h-[33px] w-[38px] items-center justify-center rounded-[3px] border border-[#a8a8a8] border-b-[#949494] bg-linear-to-b from-white from-40% to-[#ebebeb] shadow-[0_1px_1px_rgba(0,0,0,0.2)]" aria-label="Поиск по штрихкоду"><svg class="h-5 w-5" viewBox="0 0 20 20"><path d="M1.500 1v14M4.500 1v14M6.500 1v12M9.500 1v12M12 1v12M14.500 1v12M18.500 1v14" stroke="#444" stroke-width="1.500"/><path d="M13.500 14.500l4.500 5" stroke="#c98f5b" stroke-width="2.600"/><circle cx="10.500" cy="11.500" r="4.500" fill="#d3e6f7" stroke="#b0bcc6" stroke-width="1.200"/></svg></button>
  </div>

  <div class="mt-[11px] min-h-0 flex-1 border border-[#a0a0a0]">
    <table class="w-full table-fixed border-collapse text-left whitespace-nowrap">
      <colgroup><col class="w-[41px]"><col class="w-[171px]"><col class="w-[269px]"><col class="w-[195px]"><col class="w-[208px]"><col></colgroup>
      <thead><tr class="h-[35px] border-b border-[#c8c8c8] bg-[#f1f1f1] *:border-r *:border-[#c8c8c8] *:pb-px *:pl-2.5 *:font-normal"><th></th><th>Заказ площадки</th><th>Товар</th><th>Код размера</th><th>Баркод</th><th class="border-r-0">Артикул</th></tr></thead>
      <tbody><tr class="h-[34px] border-b border-[#e2e2e2] bg-[#fdf1c7] text-[#333] *:border-r *:border-white *:pl-2.5">
        <td class="relative"><label class="absolute inset-0 grid content-center border-3 border-[#fcc81c] bg-[#fee092] pl-2"><input type="checkbox" checked aria-label="Выбрать заказ" class="col-start-1 row-start-1 h-[19px] w-[19px] appearance-none rounded-[2px] border border-[#999] bg-white"><svg class="col-start-1 row-start-1 h-[19px] w-[19px]"><use href="#i-check"/></svg></label><span class="absolute -top-[7px] -right-[9px] -bottom-[6px] -left-[6px] z-10 border-5 border-[#ff4646]"></span></td>
        <td>29211914</td><td>Книга "Теория для практиков.…</td><td>256</td><td>4601546074625</td><td class="border-r-0">RDV10004</td></tr></tbody>
    </table>
  </div>
</div>
</body>
</html>
